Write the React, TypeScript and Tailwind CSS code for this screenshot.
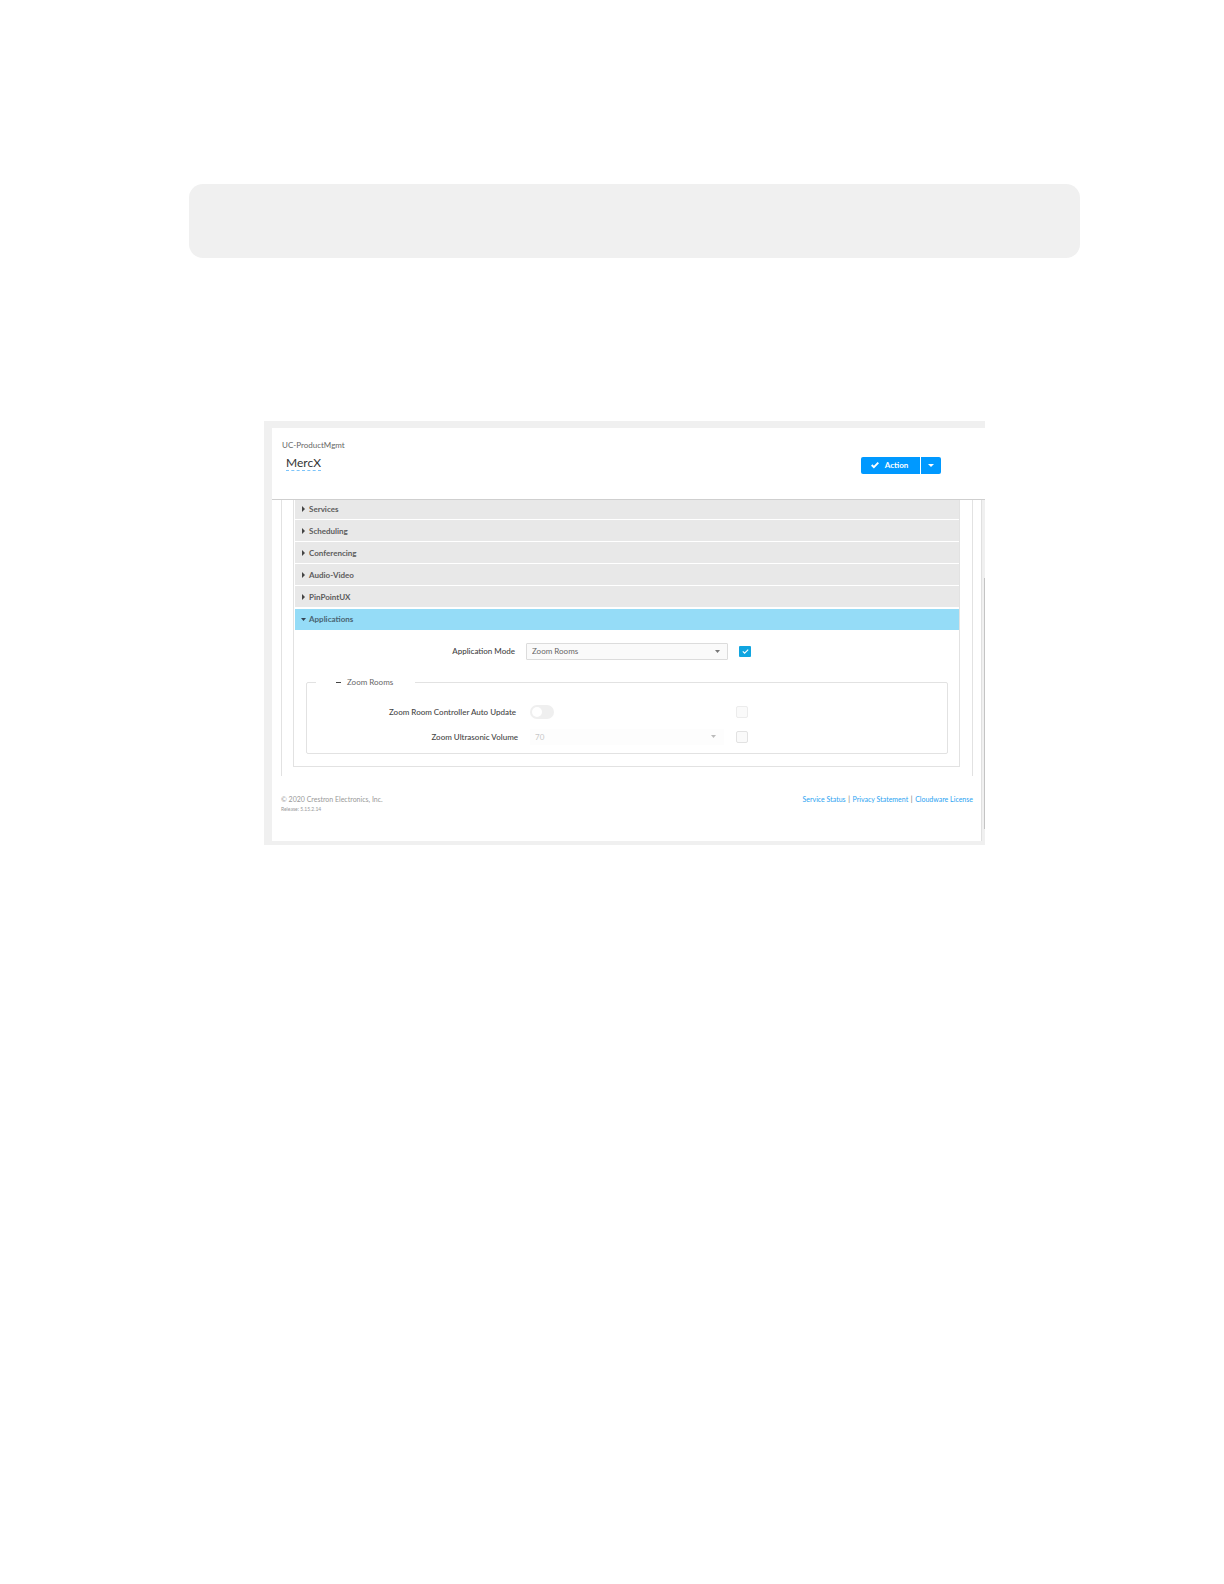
import React, { useState } from 'react';

const closedSections = ['Services', 'Scheduling', 'Conferencing', 'Audio-Video', 'PinPointUX'];

const footerLinks = ['Service Status', 'Privacy Statement', 'Cloudware License'];

const Caret = ({ className }: { className: string }) => (
  <svg className={className} viewBox="0 0 6 4" preserveAspectRatio="none" fill="currentColor" aria-hidden="true">
    <path d="M0 0h6L3 4z" />
  </svg>
);

const Header = () => (
  <header className="flex h-[72px] items-start justify-between border-b border-[#cfcfcf] bg-white pl-[10px] pr-[44px]">
    <div className="pt-[11px]">
      <p className="text-[8px] leading-[12px] text-[#666]">UC-ProductMgmt</p>
      <h1 className="ml-1 mt-[5px] w-fit border-b border-dashed border-[#7cc4fa] text-[12px] leading-[14px] text-[#333]">
        MercX
      </h1>
    </div>
    <div className="mt-[29px] flex h-[17px] gap-px text-white">
      <button className="flex w-[59px] items-center justify-center gap-[6px] rounded-l-[2px] bg-[#0099ff] pb-px pr-[2px] text-[8px] font-bold">
        <svg className="h-2 w-2" viewBox="0 0 8 8" fill="none" stroke="currentColor" strokeWidth={1.9} aria-hidden="true">
          <path d="M0.7 4l2.2 2.2L7.3 1.7" />
        </svg>
        Action
      </button>
      <button aria-label="More actions" className="flex w-5 items-center justify-center rounded-r-[2px] bg-[#0099ff] pb-px">
        <Caret className="h-[3px] w-[6px]" />
      </button>
    </div>
  </header>
);

const ZoomRooms = () => {
  const [autoUpdate, setAutoUpdate] = useState(false);

  return (
    <fieldset className="mb-3 ml-3 mr-[11px] h-[79px] rounded-[2px] border border-[#e2e2e2]">
      <legend className="ml-[9px] flex h-[14px] w-[99px] items-center">
        <button className="ml-[20px] flex items-center gap-[6px] text-[8px] leading-[14px] text-[#666]">
          <span className="h-px w-[5px] bg-[#444]" />
          Zoom Rooms
        </button>
      </legend>
      <div className="mt-[14px] flex h-[18px] items-center">
        <label htmlFor="auto-update" className="w-[209px] text-right text-[8px] font-medium text-[#444]">
          Zoom Room Controller Auto Update
        </label>
        <div className="ml-[14px] flex w-[206px] items-center">
          <input
            id="auto-update"
            type="checkbox"
            role="switch"
            checked={autoUpdate}
            onChange={(e) => setAutoUpdate(e.target.checked)}
            className="h-[14px] w-6 appearance-none rounded-full bg-[#efefef] before:ml-[2px] before:mt-[2px] before:block before:h-[10px] before:w-[10px] before:rounded-full before:bg-white checked:before:ml-3"
          />
        </div>
        <input
          type="checkbox"
          aria-label="Override auto update"
          className="h-3 w-3 appearance-none rounded-[2px] border border-[#ececec] bg-[#fafafa]"
        />
      </div>
      <div className="mt-[7px] flex h-[18px] items-center">
        <label htmlFor="volume" className="w-[211px] text-right text-[8px] font-medium text-[#444]">
          Zoom Ultrasonic Volume
        </label>
        <div className="relative ml-3 w-[194px]">
          <select
            id="volume"
            disabled
            className="block h-4 w-full appearance-none bg-[#fdfdfd] pl-[5px] text-[8px] text-[#c8c8c8] opacity-100"
          >
            <option>70</option>
          </select>
          <Caret className="pointer-events-none absolute right-2 top-[6px] h-[3px] w-[5px] text-[#bbb]" />
        </div>
        <input
          type="checkbox"
          aria-label="Override ultrasonic volume"
          className="ml-3 h-3 w-3 appearance-none rounded-[2px] border border-[#e2e2e2] bg-[#fafafa]"
        />
      </div>
    </fieldset>
  );
};

const Applications = () => {
  const [enabled, setEnabled] = useState(true);

  return (
    <>
      <button className="ml-px mt-px flex h-[21px] items-center gap-[3px] bg-[#95dcf7] pb-px pl-[6px] text-[8px] font-bold text-[#4a6472]">
        <Caret className="h-[3px] w-[5px] text-[#345]" />
        Applications
      </button>
      <div className="flex h-[45px] items-center pb-[3px]">
        <label htmlFor="mode" className="w-[221px] text-right text-[8px] font-medium text-[#444]">
          Application Mode
        </label>
        <div className="relative ml-[11px] w-[202px]">
          <select
            id="mode"
            className="block h-[17px] w-full appearance-none rounded-[1px] border border-[#dcdcdc] bg-[#fafafa] pl-[5px] text-[8px] text-[#666]"
          >
            <option>Zoom Rooms</option>
          </select>
          <Caret className="pointer-events-none absolute right-2 top-[7px] h-[3px] w-[5px] text-[#777]" />
        </div>
        <div className="ml-[11px] grid">
          <input
            type="checkbox"
            aria-label="Apply application mode"
            checked={enabled}
            onChange={(e) => setEnabled(e.target.checked)}
            className="peer col-start-1 row-start-1 h-[11px] w-3 appearance-none rounded-[1px] bg-[#d8d8d8] checked:bg-[#10a5e0]"
          />
          <svg
            className="pointer-events-none col-start-1 row-start-1 m-auto hidden h-[7px] w-[7px] text-white peer-checked:block"
            viewBox="0 0 7 7"
            fill="none"
            stroke="currentColor"
            strokeWidth={1.1}
            aria-hidden="true"
          >
            <path d="M0.8 3.4l1.8 1.8L6.2 1.7" />
          </svg>
        </div>
      </div>
      <ZoomRooms />
    </>
  );
};

const App = () => {
  return (
    <main className="min-h-screen bg-white pb-16 pl-[189px] pr-[144px] pt-[184px] font-['Lato',sans-serif]">
      {/* Empty note box */}
      <div className="h-[74px] rounded-[14px] bg-[#f0f0f0]" />

      <section className="ml-[75px] mr-[95px] mt-[163px] bg-[#f0f0f0] pb-1 pl-2 pt-[7px]">
        <Header />
        <div className="flex">
          <div className="flex-1 bg-white">
            <div className="ml-[9px] mr-2 border-x border-[#e2e2e2] pb-[9px] pl-[11px] pr-3">
              <div className="flex flex-col border border-t-0 border-[#e2e2e2]">
                {closedSections.map((section) => (
                  <button
                    key={section}
                    className="mb-px ml-px flex h-[21px] items-center gap-1 bg-[#e8e8e8] pl-[7px] text-[8px] font-bold text-[#5c5c5c] first:h-[19px] first:pb-[2px]"
                  >
                    <svg className="h-[6px] w-[3px] text-[#444]" viewBox="0 0 3 6" fill="currentColor" aria-hidden="true">
                      <path d="M0 0v6l3-3z" />
                    </svg>
                    {section}
                  </button>
                ))}
                <Applications />
              </div>
            </div>
            <footer className="flex items-start justify-between pb-[28px] pl-[9px] pr-2 pt-[17px]">
              <div className="text-[#999]">
                <p className="text-[7px] leading-[12px]">© 2020 Crestron Electronics, Inc.</p>
                <p className="text-[5px] leading-[8px]">Release: 5.15.2.14</p>
              </div>
              <nav className="flex gap-[2px] text-[7px] leading-[12px] text-[#2ba3f2]">
                {footerLinks.map((link, i) => (
                  <React.Fragment key={link}>
                    {i > 0 && <span className="w-[3px] text-center text-[#666]">|</span>}
                    <a href="#">{link}</a>
                  </React.Fragment>
                ))}
              </nav>
            </footer>
          </div>
          {/* Scrollbar */}
          <div className="flex w-1 flex-col items-end border-l border-[#e0e0e0] pb-[12px] pt-[78px]">
            <div className="w-px flex-1 bg-[#c4c4c4]" />
          </div>
        </div>
      </section>
    </main>
  );
};

export default App;
